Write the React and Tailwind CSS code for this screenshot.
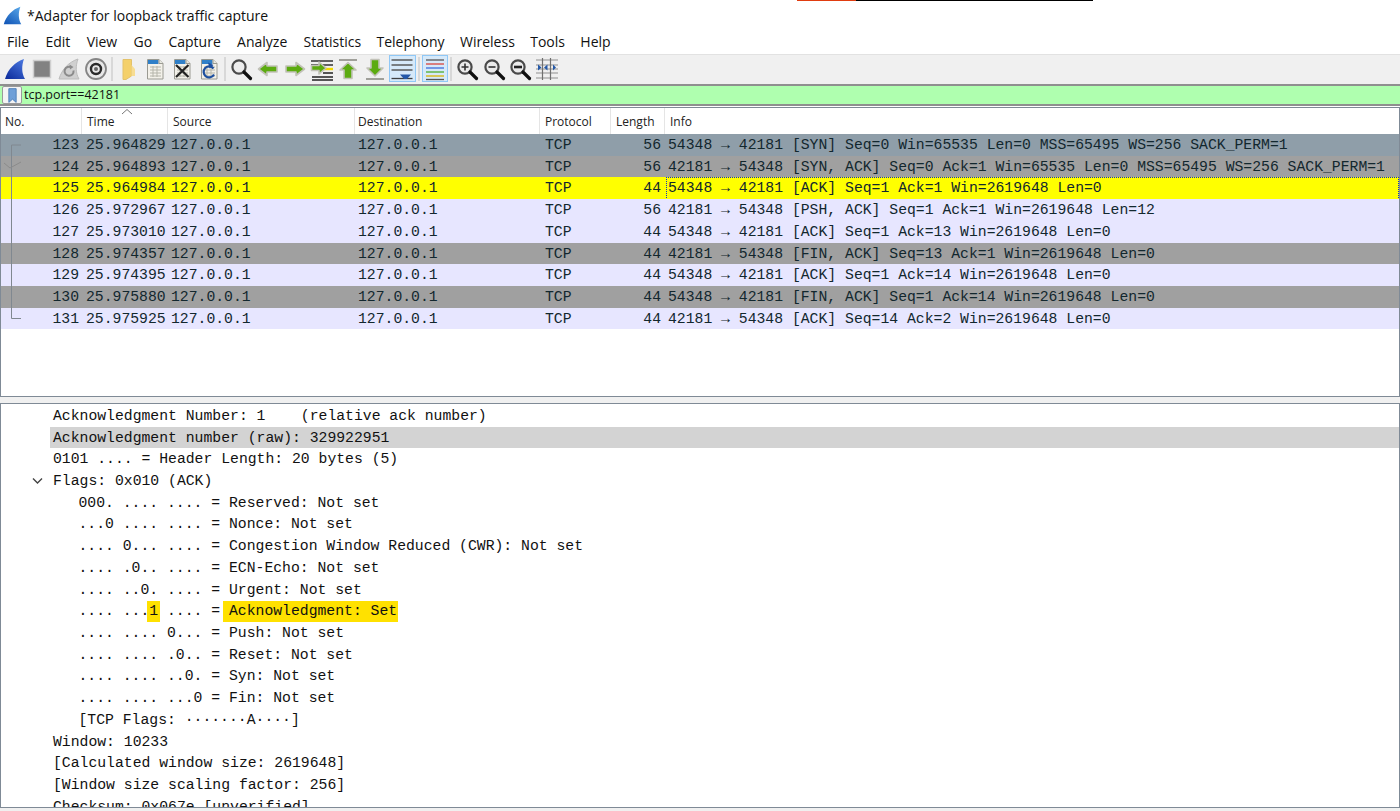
import React from "react";

const mono = "font-['Liberation_Mono',monospace] text-[14.75px]";
const ui = "font-['Open_Sans',sans-serif]";

const packets = [
  ["123", "25.964829", "56", "54348 → 42181 [SYN] Seq=0 Win=65535 Len=0 MSS=65495 WS=256 SACK_PERM=1", "bg-[#8f9ea9]"],
  ["124", "25.964893", "56", "42181 → 54348 [SYN, ACK] Seq=0 Ack=1 Win=65535 Len=0 MSS=65495 WS=256 SACK_PERM=1", "bg-[#a0a0a0]"],
  ["125", "25.964984", "44", "54348 → 42181 [ACK] Seq=1 Ack=1 Win=2619648 Len=0", "bg-[#ffff00]"],
  ["126", "25.972967", "56", "42181 → 54348 [PSH, ACK] Seq=1 Ack=1 Win=2619648 Len=12", "bg-[#e7e6ff]"],
  ["127", "25.973010", "44", "54348 → 42181 [ACK] Seq=1 Ack=13 Win=2619648 Len=0", "bg-[#e7e6ff]"],
  ["128", "25.974357", "44", "42181 → 54348 [FIN, ACK] Seq=13 Ack=1 Win=2619648 Len=0", "bg-[#a0a0a0]"],
  ["129", "25.974395", "44", "54348 → 42181 [ACK] Seq=1 Ack=14 Win=2619648 Len=0", "bg-[#e7e6ff]"],
  ["130", "25.975880", "44", "54348 → 42181 [FIN, ACK] Seq=1 Ack=14 Win=2619648 Len=0", "bg-[#a0a0a0]"],
  ["131", "25.975925", "44", "42181 → 54348 [ACK] Seq=14 Ack=2 Win=2619648 Len=0", "bg-[#e7e6ff]"],
];

const menus = ["File", "Edit", "View", "Go", "Capture", "Analyze", "Statistics", "Telephony", "Wireless", "Tools", "Help"];

const columns = [
  ["No.", "pl-[4px]"],
  ["Time", "pl-[5px]"],
  ["Source", "pl-[5px]"],
  ["Destination", "pl-[3px]"],
  ["Protocol", "pl-[5px]"],
  ["Length", "pl-[5px]"],
  ["Info", "pl-[5px]"],
];

const flagLines = [
  "000. .... .... = Reserved: Not set",
  "...0 .... .... = Nonce: Not set",
  ".... 0... .... = Congestion Window Reduced (CWR): Not set",
  ".... .0.. .... = ECN-Echo: Not set",
  ".... ..0. .... = Urgent: Not set",
  "ACK",
  ".... .... 0... = Push: Not set",
  ".... .... .0.. = Reset: Not set",
  ".... .... ..0. = Syn: Not set",
  ".... .... ...0 = Fin: Not set",
  "[TCP Flags: ·······A····]",
];

function Shark({ id = "fin", from = "#3f6fe0", to = "#0f2f9f", size = 24 }) {
  return (
    <svg width={size} height={size} viewBox="0 0 24 24">
      <defs>
        <linearGradient id={id} x1="0.9" y1="0" x2="0.2" y2="1">
          <stop offset="0" stopColor={from} />
          <stop offset="1" stopColor={to} />
        </linearGradient>
      </defs>
      <path d="M2 22C5 12 12 5 21 2C18.5 9 18.5 16 22 22Z" fill={`url(#${id})`} />
    </svg>
  );
}

function Doc({ children }) {
  return (
    <svg width="24" height="24" viewBox="0 0 24 24">
      <path d="M4.5 2.5H16L20 6.5V22H4.5Z" fill="#f3f1ea" stroke="#9a9a92" />
      <path d="M5 3H15.5V7H5Z" fill="#2f7fc8" />
      <path d="M16 2.5V6.5H20" fill="#e8e8e0" stroke="#9a9a92" />
      {children}
    </svg>
  );
}

function Grid() {
  return <path d="M7 10H18M7 13H18M7 16H18M7 19H18M10 9V20M14 9V20" stroke="#b5b5aa" strokeWidth="1" fill="none" />;
}

function Arrow({ d }) {
  return <path d={d} fill="#5cab10" stroke="#c2c2b8" strokeWidth="1.6" strokeLinejoin="round" />;
}

function Lens({ sign }) {
  return (
    <svg width="24" height="24" viewBox="0 0 24 24">
      <circle cx="10" cy="10" r="6.6" fill="#ececec" stroke="#4a4a4a" strokeWidth="2.2" />
      <path d="M15 15L21.5 21.5" stroke="#111" strokeWidth="3.2" strokeLinecap="round" />
      {sign === "plus" && <path d="M6.5 10H13.5M10 6.5V13.5" stroke="#333" strokeWidth="1.6" />}
      {sign === "minus" && <path d="M6.5 10H13.5" stroke="#333" strokeWidth="1.6" />}
      {sign === "reset" && <path d="M6 10H14" stroke="#222" strokeWidth="2.6" />}
    </svg>
  );
}

const ArrowLeft = "M2.5 12L11 5.5V9H21V15H11V18.5Z";
const ArrowRight = "M21.5 12L13 5.5V9H3V15H13V18.5Z";

const tools = [
  <Shark id="tb-fin" from="#4a78e0" to="#10309f" />,
  <svg width="24" height="24" viewBox="0 0 24 24"><rect x="3.5" y="3.5" width="17" height="17" fill="#828282" stroke="#cfcfcf" strokeWidth="1.5" /></svg>,
  <svg width="24" height="24" viewBox="0 0 24 24">
    <path d="M2 22C5 12 12 5 21 2C18.5 9 18.5 16 22 22Z" fill="#d0d0d0" stroke="#bcbcbc" />
    <path d="M16.5 13.5a4.5 4.5 0 1 1-2-3" fill="none" stroke="#8b8b8b" strokeWidth="2" />
    <path d="M12.5 7.5L16.5 10L13 12.5Z" fill="#8b8b8b" />
  </svg>,
  <svg width="24" height="24" viewBox="0 0 24 24">
    <circle cx="12" cy="12" r="10" fill="#e8e8e8" stroke="#858585" strokeWidth="1.8" />
    <circle cx="12" cy="12" r="5" fill="none" stroke="#2a2a2a" strokeWidth="2.4" />
    <circle cx="12" cy="12" r="2" fill="#666" />
  </svg>,
  "sep",
  <svg width="24" height="24" viewBox="0 0 24 24">
    <path d="M7 2.5H15.5V19L10 22.5H7Z" fill="#f4d06a" stroke="#e3c26a" />
    <path d="M15.5 8L19 12V19H15.5Z" fill="#f7dd92" />
  </svg>,
  <Doc><Grid /></Doc>,
  <Doc>
    <Grid />
    <path d="M6 8L18.5 20M18.5 8L6 20" stroke="#222" strokeWidth="2.2" />
  </Doc>,
  <Doc>
    <Grid />
    <path d="M16.5 11.5a5.5 5.5 0 1 0 0.5 6" fill="none" stroke="#1d4f9f" strokeWidth="2.2" />
    <path d="M11 5.5L16.5 8L12.5 11.5Z" fill="#1d4f9f" />
  </Doc>,
  "sep",
  <Lens />,
  <svg width="24" height="24" viewBox="0 0 24 24"><Arrow d={ArrowLeft} /></svg>,
  <svg width="24" height="24" viewBox="0 0 24 24"><Arrow d={ArrowRight} /></svg>,
  <svg width="24" height="24" viewBox="0 0 24 24">
    <path d="M1 4H23M1 8H23" stroke="#333" strokeWidth="1.3" />
    <path d="M14 12H23" stroke="#f0d800" strokeWidth="2.4" />
    <path d="M13 16H23M2 20H23M2 23H23" stroke="#222" strokeWidth="1.5" />
    <Arrow d="M16 11L9 5V8.5H1.5V13.5H9V17Z" />
  </svg>,
  <svg width="24" height="24" viewBox="0 0 24 24">
    <path d="M3 3H21" stroke="#a0a09a" strokeWidth="2" />
    <Arrow d="M12 5.5L20 13H16V21.5H8V13H4Z" />
  </svg>,
  <svg width="24" height="24" viewBox="0 0 24 24">
    <path d="M3 22H21" stroke="#a0a09a" strokeWidth="2" />
    <Arrow d="M12 19L20 11H16V2.5H8V11H4Z" />
  </svg>,
  "scroll",
  "sep",
  "color",
  "sep",
  <Lens sign="plus" />,
  <Lens sign="minus" />,
  <Lens sign="reset" />,
  <svg width="24" height="24" viewBox="0 0 24 24">
    <path d="M1 3H23M1 8H23M1 12H23M1 16H23M1 21H23" stroke="#8f8f8f" strokeWidth="1" />
    <path d="M7.5 1V23M15.5 1V23" stroke="#6f6f6f" strokeWidth="1.2" />
    <path d="M3 7.5L6.5 10.5L3 13.5ZM12.5 7.5L9 10.5L12.5 13.5Z" fill="#2458a8" />
    <path d="M18 7.5L21 10.5L18 13.5Z" fill="#2458a8" />
  </svg>,
];

function ToolItem({ item }) {
  if (item === "sep") {
    return (
      <div className="w-[6px] h-[24px] flex justify-center">
        <div className="w-[2px] h-full bg-[#d8d8d8]" />
      </div>
    );
  }
  if (item === "scroll") {
    return (
      <div className="w-[27px] h-[27px] flex items-center justify-center border border-[#90c8f6] bg-[#d6e9f9]">
        <svg width="24" height="24" viewBox="0 0 24 24">
          <path d="M1.5 3H22.5M1.5 8H22.5M1.5 13H22.5" stroke="#5a5a5a" strokeWidth="1.3" />
          <path d="M1.5 21.5H22.5" stroke="#3f3f3f" strokeWidth="1.3" />
          <path d="M10 17.5H21L17 22H14Z" fill="#2458a8" />
        </svg>
      </div>
    );
  }
  if (item === "color") {
    return (
      <div className="w-[26px] h-[27px] flex items-center justify-center border border-[#90c8f6] bg-[#d6e9f9]">
        <svg width="22" height="24" viewBox="0 0 22 24">
          <path d="M2 3H20" stroke="#555" strokeWidth="1.3" />
          <path d="M2 7H20" stroke="#d8443c" strokeWidth="1.3" />
          <path d="M2 11H20" stroke="#3c6cd8" strokeWidth="1.3" />
          <path d="M2 15H20" stroke="#4cae2c" strokeWidth="1.3" />
          <path d="M2 19H20" stroke="#d8b400" strokeWidth="1.3" />
          <path d="M2 22.5H20" stroke="#555" strokeWidth="1.3" />
        </svg>
      </div>
    );
  }
  return <div className="w-[26.75px] h-[27px] flex items-center justify-center">{item}</div>;
}

function PacketRow({ row }) {
  const [no, time, len, info, bg] = row;
  const selected = no === "125";
  return (
    <div className={`grid grid-cols-[78px_7px_85px_187px_187px_116px_6px_1fr] items-center whitespace-pre text-[#12272e] ${bg}`}>
      <div className="text-right">{no}</div>
      <div />
      <div>{time}</div>
      <div>127.0.0.1</div>
      <div>127.0.0.1</div>
      <div className="flex justify-between">
        <span>TCP</span>
        <span>{len}</span>
      </div>
      <div />
      <div className={`h-full flex items-center pl-[1px] ${selected ? "outline outline-dotted outline-[#1030c0] -outline-offset-1 -ml-[1px] pl-[2px]" : ""}`}>{info}</div>
    </div>
  );
}

function DetailLine({ indent, highlight, children }) {
  return (
    <div className={`flex items-center whitespace-pre ${indent} ${highlight ? "bg-[#d3d3d3] ml-[49px] pl-[3px]" : ""}`}>
      {children}
    </div>
  );
}

function FlagLine({ text }) {
  if (text === "ACK") {
    return (
      <DetailLine indent="pl-[77.5px]">
        <span>.... ...</span>
        <span className="bg-[#ffe100] -mx-[2px] px-[2px] h-[21px] flex items-center">1</span>
        <span> .... = </span>
        <span className="bg-[#ffe100] -ml-[6px] pl-[6px] pr-[1px] h-[21px] flex items-center">Acknowledgment: Set</span>
      </DetailLine>
    );
  }
  return <DetailLine indent="pl-[77.5px]">{text}</DetailLine>;
}

export default function App() {
  return (
    <div className="relative w-[1400px] h-[811px] overflow-hidden bg-white flex flex-col text-[#111]">
      {/* strip left over from the crop of the screenshot */}
      <div className="absolute top-0 left-[797px] flex h-[1px]">
        <div className="w-[59px] bg-[#e03c10]" />
        <div className="w-[237px] bg-black" />
      </div>

      <div className={`h-[30px] shrink-0 flex items-center pl-[2px] ${ui}`}>
        <Shark id="title-fin" from="#58a6e8" to="#1458b8" size={21} />
        <span className="ml-[4px] text-[14px]">*Adapter for loopback traffic capture</span>
      </div>

      <div className={`h-[24px] shrink-0 flex items-center pl-[7px] pb-[2px] text-[14px] ${ui}`}>
        {menus.map((m, i) => (
          <span key={m} className={i === 0 ? "" : i < 7 ? "ml-[16.3px]" : "ml-[15.4px]"}>{m}</span>
        ))}
      </div>

      <div className="h-[30px] shrink-0 flex items-center pl-[2px] pb-[2px] bg-[#f0f0f0] border-t border-[#e2e2e2]">
        {tools.map((t, i) => (
          <ToolItem key={i} item={t} />
        ))}
      </div>

      <div className="h-[22px] shrink-0 flex border-y-2 border-[#8f8f8f] bg-[#afffaf]">
        <div className="w-[20px] bg-[#f4f4f4] flex items-center justify-center border border-[#9a9a9a] rounded-[2px] ml-[2px] -mr-[2px]">
          <svg width="11" height="15" viewBox="0 0 12 16">
            <path d="M2 0.5H10V15.5L6 12L2 15.5Z" fill="#6f9fd8" stroke="#4f7fb8" />
          </svg>
        </div>
        <div className={`pl-[4px] flex items-center text-[12.5px] text-[#111] ${ui}`}>tcp.port==42181</div>
      </div>

      <div className="h-[1px] shrink-0" />

      <div className="relative h-[290px] shrink-0 border border-[#7f8a96] overflow-hidden">
        <div className={`h-[26px] grid grid-cols-[81px_86px_187px_185px_71px_54px_1fr] text-[12px] text-[#222] ${ui}`}>
          {columns.map(([label, pad]) => (
            <div key={label} className={`${pad} pt-[2px] flex items-center border-r border-[#e5e5e5] last:border-r-0`}>
              {label}
            </div>
          ))}
        </div>
        <svg className="absolute left-[120px] top-0" width="12" height="7" viewBox="0 0 12 7">
          <path d="M1 6L6 1.5L11 6" fill="none" stroke="#777" />
        </svg>
        <div className={`grid auto-rows-[21.72px] ${mono}`}>
          {packets.map((p) => (
            <PacketRow key={p[0]} row={p} />
          ))}
        </div>
        {/* conversation marker drawn over the No. column */}
        <svg className="absolute left-0 top-[26px]" width="24" height="195" viewBox="0 0 24 195">
          <path d="M10.5 11V184.5H20M10.5 11H20" fill="none" stroke="#808890" />
          <path d="M3 29L9 34L20 28" fill="none" stroke="#8b8b8b" />
        </svg>
      </div>

      <div className="h-[6px] shrink-0 bg-[#f0f0f0]" />

      <div className={`h-[405px] shrink-0 border border-[#7f8a96] overflow-hidden pt-[1px] grid auto-rows-[21.72px] content-start ${mono}`}>
        <DetailLine indent="pl-[52px]">Acknowledgment Number: 1    (relative ack number)</DetailLine>
        <DetailLine highlight>Acknowledgment number (raw): 329922951</DetailLine>
        <DetailLine indent="pl-[52px]">0101 .... = Header Length: 20 bytes (5)</DetailLine>
        <div className="relative flex items-center whitespace-pre pl-[52px]">
          <svg className="absolute left-[31px] top-[7px]" width="11" height="8" viewBox="0 0 11 8">
            <path d="M1 1.5L5.5 6L10 1.5" fill="none" stroke="#444" strokeWidth="1.4" />
          </svg>
          Flags: 0x010 (ACK)
        </div>
        {flagLines.map((l) => (
          <FlagLine key={l} text={l} />
        ))}
        <DetailLine indent="pl-[52px]">Window: 10233</DetailLine>
        <DetailLine indent="pl-[52px]">[Calculated window size: 2619648]</DetailLine>
        <DetailLine indent="pl-[52px]">[Window size scaling factor: 256]</DetailLine>
        <DetailLine indent="pl-[52px]">Checksum: 0x067e [unverified]</DetailLine>
      </div>

      <div className="flex-1 bg-[#f0f0f0]" />
    </div>
  );
}
